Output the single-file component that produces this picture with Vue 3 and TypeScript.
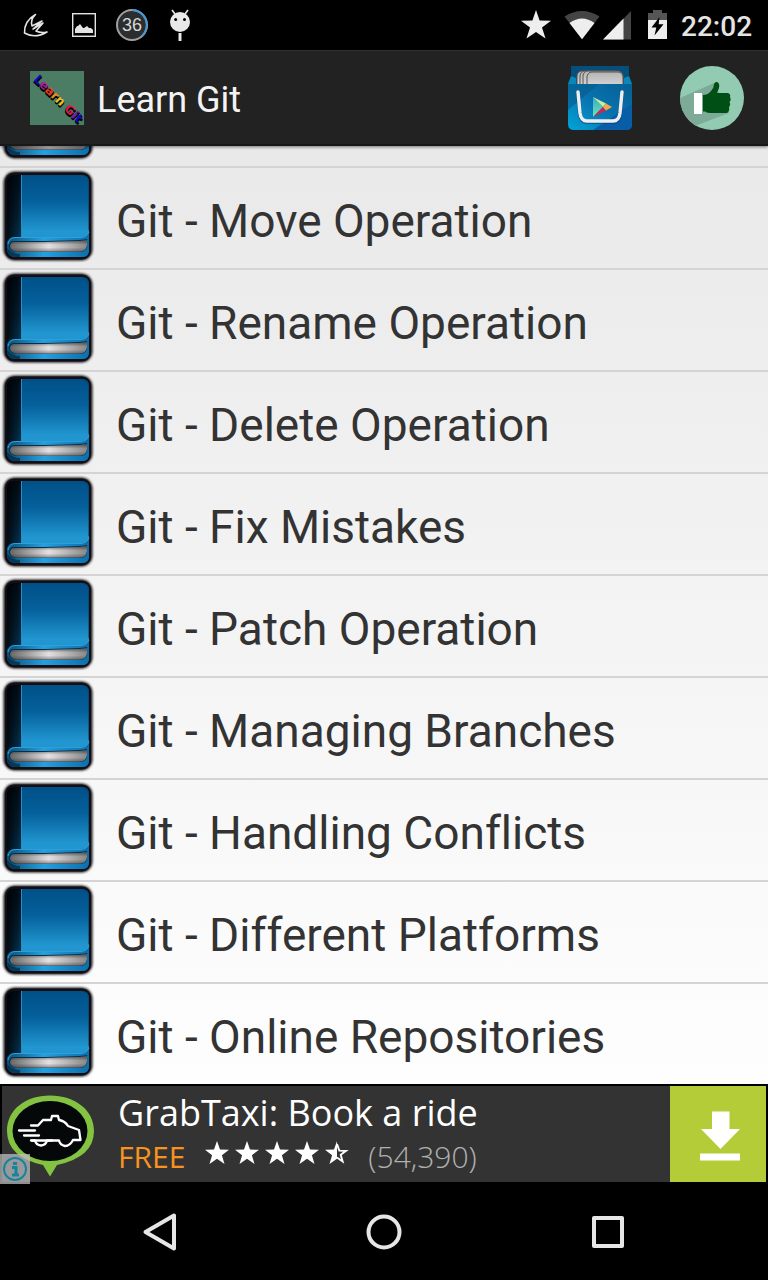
<script setup lang="ts">
const topics: string[] = [
  'Git - Move Operation',
  'Git - Rename Operation',
  'Git - Delete Operation',
  'Git - Fix Mistakes',
  'Git - Patch Operation',
  'Git - Managing Branches',
  'Git - Handling Conflicts',
  'Git - Different Platforms',
  'Git - Online Repositories',
]

const rows: string[] = ['', ...topics]

const logoLetters: { char: string; color: string }[] = [
  { char: 'L', color: '#1508c8' },
  { char: 'e', color: '#a8209a' },
  { char: 'a', color: '#e83a20' },
  { char: 'r', color: '#f08a10' },
  { char: 'n', color: '#f0c020' },
  { char: ' ', color: '#000' },
  { char: 'G', color: '#d81848' },
  { char: 'i', color: '#7a1cb8' },
  { char: 't', color: '#1508c8' },
]

const starPath = 'M12 0 L15 8.6 L24 8.8 L16.9 14.2 L19.5 23 L12 17.8 L4.5 23 L7.1 14.2 L0 8.8 L9 8.6 Z'
</script>

<template>
  <div class="screen">
    <svg class="defs" width="0" height="0" aria-hidden="true">
      <defs>
        <linearGradient id="cover" x1="0" y1="0" x2="0" y2="1">
          <stop offset="0" stop-color="#005088" />
          <stop offset="0.4" stop-color="#05609b" />
          <stop offset="0.85" stop-color="#2196d0" />
          <stop offset="1" stop-color="#2295ce" />
        </linearGradient>
        <linearGradient id="spine" x1="0" y1="0" x2="0" y2="1">
          <stop offset="0" stop-color="#000d18" />
          <stop offset="0.5" stop-color="#022238" />
          <stop offset="1" stop-color="#064268" />
        </linearGradient>
        <linearGradient id="spineShade" x1="0" y1="0" x2="1" y2="0">
          <stop offset="0" stop-color="#000" stop-opacity="0.8" />
          <stop offset="1" stop-color="#000" stop-opacity="0" />
        </linearGradient>
        <linearGradient id="pages" x1="0" y1="0" x2="1" y2="0">
          <stop offset="0" stop-color="#666" />
          <stop offset="0.5" stop-color="#e4e0e2" />
          <stop offset="1" stop-color="#888" />
        </linearGradient>
        <linearGradient id="pagesShade" x1="0" y1="0" x2="0" y2="1">
          <stop offset="0" stop-color="#222" stop-opacity="0.6" />
          <stop offset="0.4" stop-color="#222" stop-opacity="0" />
          <stop offset="0.65" stop-color="#222" stop-opacity="0" />
          <stop offset="1" stop-color="#222" stop-opacity="0.4" />
        </linearGradient>
        <linearGradient id="trim" x1="0" y1="0" x2="1" y2="0">
          <stop offset="0" stop-color="#07507c" />
          <stop offset="0.45" stop-color="#25a0e0" />
          <stop offset="1" stop-color="#0b6fac" />
        </linearGradient>
        <filter id="soft" x="-20%" y="-20%" width="140%" height="140%">
          <feGaussianBlur stdDeviation="1.3" />
        </filter>
      </defs>
    </svg>

    <header class="status">
      <div class="status-left">
        <svg width="48" height="50" viewBox="12 0 48 50" aria-hidden="true">
          <path d="M35.500 14.500 Q24 21 24.500 33 Q35 39 47 32 Q41 33.500 36 31 L43 23 L33 29 L42 21 L32 26 Q30 20 35.500 14.500 Z" fill="none" stroke="#e4e4e4" stroke-width="1.600" stroke-linejoin="round" />
        </svg>
        <svg width="48" height="50" viewBox="60 0 48 50" aria-hidden="true">
          <rect x="72.700" y="13.700" width="22.600" height="22.600" fill="none" stroke="#e4e4e4" stroke-width="1.400" />
          <path d="M75 33 V29 L77 26 H78 L80 24 L83 28 H84 L87 26 L89 28 H91 L93 30 V33 Z" fill="#e4e4e4" />
        </svg>
        <svg width="48" height="50" viewBox="108 0 48 50" aria-hidden="true">
          <circle cx="132" cy="25" r="15" fill="#2b2d2e" stroke="#a0a0a0" stroke-width="2" />
          <path d="M132 10 A15 15 0 0 1 142 36" fill="none" stroke="#4298d6" stroke-width="2" />
          <text x="132" y="31" text-anchor="middle" class="badge">36</text>
        </svg>
        <svg width="48" height="50" viewBox="156 0 48 50" aria-hidden="true">
          <path d="M172 10 L175 14 M188 10 L185 14" stroke="#e8e8e8" stroke-width="1.600" />
          <circle cx="180" cy="22" r="10" fill="#e8e8e8" />
          <circle cx="175.700" cy="19.500" r="1.500" fill="#000" />
          <circle cx="184.500" cy="19.500" r="1.500" fill="#000" />
          <rect x="178.500" y="33" width="3" height="8" fill="#e8e8e8" />
        </svg>
      </div>
      <div class="status-right">
        <svg width="48" height="50" viewBox="512 0 48 50" aria-hidden="true">
          <path d="M536 10 L539.600 20.400 L551 20.800 L542 27.600 L545.500 38.500 L536 32 L526.500 38.500 L530 27.600 L521 20.800 L532.400 20.400 Z" fill="#eee" />
        </svg>
        <svg width="42" height="50" viewBox="560 0 42 50" aria-hidden="true">
          <path d="M582 39.300 L564.500 16.500 Q582 5.500 599.500 16.500 Z" fill="#444" />
          <path d="M582 39.300 L569.500 23 Q582 14 594.500 23 Z" fill="#eee" />
        </svg>
        <svg width="36" height="50" viewBox="602 0 36 50" aria-hidden="true">
          <path d="M603 39.500 L631 11 V39.500 Z" fill="#444" />
          <path d="M603 39.500 L623.500 18.600 V39.500 Z" fill="#eee" />
        </svg>
        <svg width="36" height="50" viewBox="638 0 36 50" aria-hidden="true">
          <path d="M648 20 V13 H653 V10 H662 V13 H667 V20 Z" fill="#555" />
          <rect x="648" y="20" width="19" height="19" fill="#eee" />
          <path d="M659.500 17 L651.500 27.500 H656.300 L654.500 35.500 L663.500 24.300 H658.700 Z" fill="#000" />
        </svg>
        <span class="clock">22:02</span>
      </div>
    </header>

    <nav class="appbar" aria-label="App">
      <svg class="logo" width="54" height="54" viewBox="0 0 54 54" aria-hidden="true">
        <rect width="54" height="54" fill="#4b7c64" />
        <g transform="translate(3 9) rotate(44)">
          <text x="1" y="1" class="logo-text" fill="#000" stroke="#000" stroke-width="1">Learn Git</text>
          <text x="0" y="0" class="logo-text"><tspan v-for="(l, i) in logoLetters" :key="i" :fill="l.color">{{ l.char }}</tspan></text>
        </g>
      </svg>
      <h1 class="title">Learn Git</h1>
      <button class="action" type="button" aria-label="More apps">
        <svg width="64" height="64" viewBox="0 0 64 64">
          <defs>
            <linearGradient id="bag" x1="1" y1="0" x2="0" y2="1">
              <stop offset="0" stop-color="#065f92" />
              <stop offset="0.5" stop-color="#0873b0" />
              <stop offset="1" stop-color="#00a5d8" />
            </linearGradient>
            <linearGradient id="card" x1="0" y1="0" x2="0" y2="1">
              <stop offset="0" stop-color="#b5b5b5" />
              <stop offset="1" stop-color="#e2e2e2" />
            </linearGradient>
            <linearGradient id="play" x1="0" y1="0" x2="0" y2="1">
              <stop offset="0" stop-color="#35a8d0" />
              <stop offset="1" stop-color="#70e5b0" />
            </linearGradient>
          </defs>
          <path d="M3 0 H61 V18 H3 Z" fill="#044f7c" />
          <path d="M3 10 L8 12 V18 H0 Z M61 10 L56 12 V18 H64 Z" fill="#0788bd" />
          <g fill="url(#card)" stroke="#555" stroke-width="1">
            <rect x="9" y="5" width="40" height="20" rx="5" />
            <rect x="12" y="5" width="40" height="20" rx="5" />
            <rect x="15" y="5" width="40" height="20" rx="5" />
            <rect x="19" y="6" width="36" height="20" rx="5" />
          </g>
          <path d="M0 18 H64 V58 Q64 64 58 64 H6 Q0 64 0 58 Z" fill="url(#bag)" />
          <path d="M64 38 L25 64 H58 Q64 64 64 58 Z" fill="#075da8" />
          <path d="M31 18 L0 44 V18 Z" fill="#075b8a" opacity="0.600" />
          <path d="M10 27 L12 48 Q13 56 19 56 H45 Q51 56 52 48 L54 27" fill="none" stroke="#053e68" stroke-width="4" opacity="0.500" />
          <path d="M10 26 L12 47 Q13 55 19 55 H45 Q51 55 52 47 L54 26" fill="none" stroke="#eee" stroke-width="3.400" stroke-linecap="round" />
          <path d="M25 31 V51 L35 41 Z" fill="url(#play)" />
          <path d="M25 31 L38 37.500 L35 41 Z" fill="#c5ef9a" />
          <path d="M25 51 L38 44.500 L35 41 Z" fill="#c92752" />
          <path d="M38 37.500 L44 41 L38 44.500 L35 41 Z" fill="#f5a54c" />
        </svg>
      </button>
      <button class="action" type="button" aria-label="Rate this app">
        <svg width="64" height="64" viewBox="0 0 64 64">
          <defs>
            <clipPath id="disc"><circle cx="32" cy="32" r="32" /></clipPath>
          </defs>
          <circle cx="32" cy="32" r="32" fill="#92cab2" />
          <path d="M-2 33 L34 17 L49 47 L12 61 L-2 56 Z" fill="#7dab98" clip-path="url(#disc)" />
          <rect x="14" y="27" width="8" height="21" fill="#fff" />
          <path d="M23 29 Q28 29 31 25 Q34 22 34 18 Q35 15.500 37 16 Q40 17 39 22 L37 27 H48 Q51 28 50 31 Q51.500 34 49.500 36 Q51 39 49 41 Q50 45 47 47 H31 Q27 47 25 45.500 H23 Z" fill="#005015" />
        </svg>
      </button>
    </nav>

    <main class="content">
      <ul class="list">
        <li v-for="(label, i) in rows" :key="i" class="row">
          <svg class="book" width="96" height="100" viewBox="0 0 96 100" aria-hidden="true">
            <rect x="3.500" y="3.500" width="89" height="89" rx="11" fill="#1a1a1a" filter="url(#soft)" />
            <rect x="5" y="4.500" width="86" height="87" rx="9" fill="#140e14" />
            <path d="M14 7 H21 V84 H7 V14 Q7 7 14 7 Z" fill="url(#spine)" />
            <path d="M14 7 H21 V76 H7 V14 Q7 7 14 7 Z" fill="url(#spineShade)" />
            <path d="M21 7 H82 Q89 7 89 14 V73 H21 Z" fill="url(#cover)" />
            <path d="M21.500 7 V70" stroke="#2391c7" stroke-width="1" />
            <path d="M84 8 Q88.500 9 88.500 15 V62" fill="none" stroke="#033b62" stroke-width="1" opacity="0.500" />
            <path d="M7 74 Q9 69 14 69 H80 Q87 69 89 64 V84 Q88 89 83 89 H14 Q8 88 7 82 Z" fill="url(#trim)" />
            <path d="M8 76 Q9 70 15 69.500 H81 Q87 69 89 64" fill="none" stroke="#2f9fd8" stroke-width="1" />
            <path d="M14 73 Q80 73 87 71 V77 Q87 84 80 84 H16 Q9 83 9 78 Q10 73 14 73 Z" fill="#0a2c44" />
            <path d="M14 74 Q80 74 87 72 V77 Q86 83.500 80 83.500 H16 Q10 82 10 78 Q11 74 14 74 Z" fill="url(#pages)" />
            <path d="M14 74 Q80 74 87 72 V77 Q86 83.500 80 83.500 H16 Q10 82 10 78 Q11 74 14 74 Z" fill="url(#pagesShade)" />
            <path d="M7 83 Q9 88 15 89 H20 V86 Q13 86 7 80 Z" fill="#04283e" opacity="0.700" />
          </svg>
          <span class="label">{{ label }}</span>
        </li>
      </ul>
    </main>

    <aside class="ad" aria-label="Advertisement">
      <div class="ad-icon">
        <svg width="94" height="96" viewBox="2 1086 94 96" aria-hidden="true">
          <path d="M50 1176.500 L43 1165 Q7 1157 7 1131 C7 1110 25 1095.500 50 1095.500 C75 1095.500 94 1110 94 1131 Q94 1157 57 1165 Z" fill="#83c341" />
          <ellipse cx="50" cy="1131" rx="37.500" ry="30" fill="#050809" />
          <g fill="none" stroke="#fff" stroke-width="2.300" stroke-linejoin="round" stroke-linecap="round">
            <path d="M31 1125.500 H38 L43 1120 H51 L52 1116 H58 L59 1120 Q65 1121 68 1126 L79 1130 L80.500 1140 H73 Q70 1146 65 1146 Q60 1145 59 1140.500 H47 Q46 1145 41 1145.500 Q36 1145 35 1140.500 H31" />
            <path d="M19 1130.500 H35 M24 1135.500 H39 M32 1140.500 H52" />
          </g>
        </svg>
        <button class="ad-info" type="button" aria-label="Ad information">
          <svg width="30" height="30" viewBox="0 0 30 30">
            <circle cx="15" cy="15" r="11" fill="none" stroke="#16849e" stroke-width="2" />
            <path d="M12 13.500 H16 V21 M12 21 H19 M13 9.500 H17" fill="none" stroke="#16849e" stroke-width="3" />
          </svg>
        </button>
      </div>
      <div class="ad-body">
        <span class="ad-title">GrabTaxi: Book a ride</span>
        <div class="ad-meta">
          <span class="free">FREE</span>
          <span class="stars" role="img" aria-label="4.5 out of 5 stars">
            <svg v-for="n in 4" :key="n" width="24" height="24" viewBox="0 0 24 24">
              <path :d="starPath" fill="#fff" />
            </svg>
            <svg width="24" height="24" viewBox="0 0 24 24">
              <path d="M12 0 V17.800 L4.500 23 L7.100 14.200 L0 8.800 L9 8.600 Z" fill="#fff" />
              <path d="M12 3 L14.300 9.600 L21 9.800 L15.700 13.800 L17.600 20.400 L12 16.400" fill="none" stroke="#fff" stroke-width="1.900" />
            </svg>
          </span>
          <span class="count">(54,390)</span>
        </div>
      </div>
      <button class="download" type="button" aria-label="Download">
        <svg width="96" height="96" viewBox="0 0 96 96">
          <path d="M42 25.500 H59.500 V43 H70 L50.500 63 L31 43 H42 Z M30 67.500 H70 V74.500 H30 Z" fill="#fff" />
        </svg>
      </button>
    </aside>

    <footer class="navbar">
      <button class="nav-btn" type="button" aria-label="Back">
        <svg width="48" height="48" viewBox="0 0 48 48"><path d="M9.500 24 L38 7.500 V40.500 Z" /></svg>
      </button>
      <button class="nav-btn" type="button" aria-label="Home">
        <svg width="48" height="48" viewBox="0 0 48 48"><circle cx="24" cy="24" r="15.500" /></svg>
      </button>
      <button class="nav-btn" type="button" aria-label="Recent apps">
        <svg width="48" height="48" viewBox="0 0 48 48"><rect x="10" y="10" width="28" height="28" /></svg>
      </button>
    </footer>
  </div>
</template>

<style>
body {
  margin: 0;
  background: #000;
}
</style>

<style scoped>
.screen {
  display: flex;
  flex-direction: column;
  height: 100vh;
  background: #000;
  font-family: Roboto, "Liberation Sans", sans-serif;
}
.defs {
  position: absolute;
}
svg {
  display: block;
  flex: none;
}
button {
  display: block;
  margin: 0;
  padding: 0;
  border: 0;
  background: none;
  flex: none;
}
.status {
  display: flex;
  justify-content: space-between;
  height: 50px;
  padding: 0 16px 0 12px;
  flex: none;
}
.status-left,
.status-right {
  display: flex;
  align-items: center;
}
.badge {
  font-family: "Liberation Sans", sans-serif;
  font-size: 18px;
  fill: #d8d8d8;
}
.clock {
  width: 71px;
  margin-left: 7px;
  padding-top: 4px;
  font-size: 28px;
  font-weight: 500;
  line-height: 46px;
  color: #e4e4e4;
}
.appbar {
  position: relative;
  z-index: 1;
  display: flex;
  align-items: center;
  box-sizing: border-box;
  height: 96px;
  padding: 0 24px 0 30px;
  flex: none;
  background: #222;
  border-top: 1px solid #303030;
  border-bottom: 2px solid #181818;
  box-shadow: 0 1px 3px rgba(0, 0, 0, 0.5);
}
.logo-text {
  font-family: "DejaVu Sans", sans-serif;
  font-size: 12px;
  font-weight: 700;
}
.title {
  flex: 1;
  margin: 0 0 0 13px;
  padding-top: 4px;
  font-size: 36px;
  font-weight: 400;
  line-height: 48px;
  color: #f3f3f3;
}
.action + .action {
  margin-left: 48px;
}
.content {
  display: flex;
  flex-direction: column;
  justify-content: flex-end;
  flex: 1;
  min-height: 0;
  overflow: hidden;
  background: linear-gradient(#e9e9e9, #fefefe);
}
.list {
  margin: 0;
  padding: 0;
  list-style: none;
}
.row {
  display: flex;
  align-items: center;
  height: 100px;
  border-bottom: 2px solid #d4d4d4;
}
.row:last-child {
  border-bottom: 0;
}
.label {
  margin-left: 20px;
  padding-top: 6px;
  font-size: 46px;
  line-height: 56px;
  font-variant-ligatures: none;
  white-space: nowrap;
  color: #333;
}
.ad {
  display: flex;
  box-sizing: border-box;
  height: 100px;
  border: 2px solid #000;
  flex: none;
  background: #333;
  font-family: "Open Sans", "Noto Sans", sans-serif;
}
.ad-icon {
  position: relative;
  flex: none;
}
.ad-info {
  position: absolute;
  left: -2px;
  bottom: -2px;
  background: rgba(190, 190, 190, 0.75);
}
.ad-body {
  flex: 1;
  padding-left: 22px;
}
.ad-title {
  display: block;
  font-size: 36px;
  line-height: 54px;
  color: #fff;
}
.ad-meta {
  display: flex;
  align-items: center;
  font-size: 30px;
  line-height: 34px;
}
.free {
  color: #f7931e;
}
.stars {
  display: flex;
  gap: 6px;
  margin: 0 19px 8px 20px;
}
.count {
  font-weight: 300;
  color: #b0b0b0;
}
.download {
  background: #b3cc38;
}
.navbar {
  display: flex;
  justify-content: center;
  align-items: center;
  gap: 176px;
  height: 96px;
  flex: none;
}
.nav-btn svg {
  fill: none;
  stroke: #e6e6e6;
  stroke-width: 4;
  stroke-linejoin: round;
}
</style>
